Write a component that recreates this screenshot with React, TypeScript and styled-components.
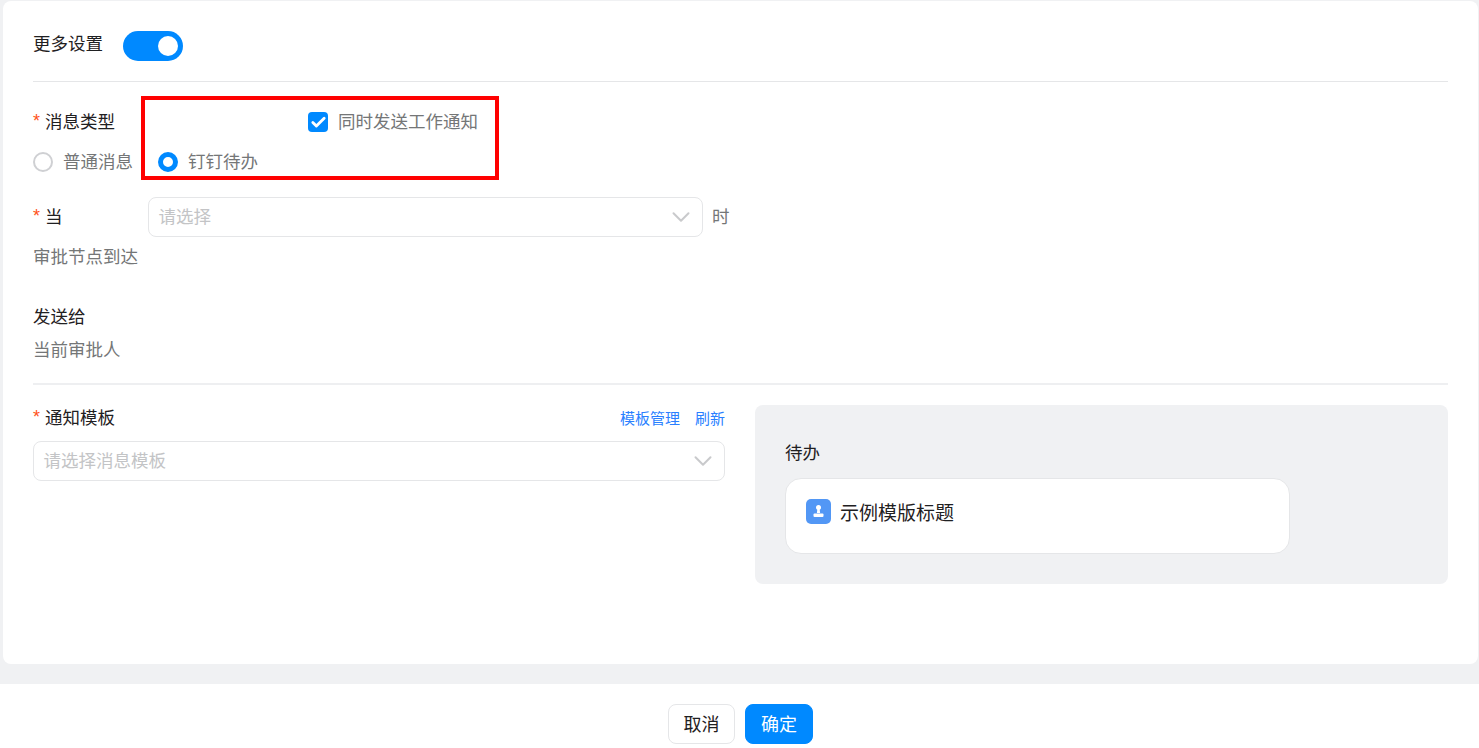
import React from 'react';
import styled, {createGlobalStyle} from 'styled-components';
import {Check, ChevronDown} from 'lucide-react';

const blue = '#0089ff';
const textDark = '#1f2022';
const textGray = '#747677';
const line = '#e5e6e8';

const GlobalStyle = createGlobalStyle`
  html, body {
    margin: 0;
    padding: 0;
    background: #f0f1f3;
  }
  body {
    font-family: "Noto Sans CJK SC", "Liberation Sans", sans-serif;
    font-size: 17.5px;
    color: ${textDark};
  }
  * {
    box-sizing: border-box;
  }
`;

const Page = styled.div`
  display: flex;
  flex-direction: column;
  height: 748px;
  overflow: hidden;
  position: relative;
  width: 1479px;
`;

const Panel = styled.main`
  background: #fff;
  border-radius: 8px;
  height: 663px;
  margin: 1px 1px 0 3px;
  padding: 30px 30px 0 30px;
`;

const Footer = styled.footer`
  align-items: flex-start;
  background: #fff;
  display: flex;
  gap: 10px;
  height: 64px;
  justify-content: center;
  margin-top: 20px;
  padding: 20px 0 0 2px;
`;

const Button = styled.button<{$primary?: boolean}>`
  background: ${props => (props.$primary ? blue : '#fff')};
  border: 1px solid ${props => (props.$primary ? blue : line)};
  border-radius: 8px;
  color: ${props => (props.$primary ? '#fff' : textDark)};
  font: inherit;
  font-size: 18px;
  height: 40px;
  line-height: 1;
  padding: 0 0 2px;
  width: ${props => (props.$primary ? '68px' : '67px')};
`;

const SwitchRow = styled.div`
  align-items: center;
  border-bottom: 1px solid ${line};
  display: flex;
  gap: 20px;
  height: 51px;
  padding-bottom: 20px;
`;

const Label = styled.span`
  height: 26px;
  line-height: 24px;
  white-space: nowrap;
`;

const SwitchLabel = styled(Label)`
  line-height: 20px;
`;

const Toggle = styled.span`
  align-items: center;
  background: ${blue};
  border-radius: 15px;
  display: flex;
  height: 30px;
  justify-content: flex-end;
  padding-right: 5px;
  width: 60px;
`;

const Knob = styled.span`
  background: #fff;
  border-radius: 50%;
  height: 20px;
  width: 20px;
`;

const Required = styled.span`
  color: #ff5219;
  display: inline-block;
  font-family: "Liberation Sans", sans-serif;
  font-size: 18px;
  line-height: 1;
  margin-right: 4px;
  vertical-align: 1px;
  width: 8px;
`;

const TypeHead = styled.div`
  align-items: center;
  display: flex;
  height: 26px;
  justify-content: space-between;
  margin-top: 27px;
  width: 445px;
`;

const OptionText = styled(Label)`
  color: ${textGray};
`;

const CheckOption = styled.label`
  align-items: center;
  display: flex;
  gap: 10px;
`;

const CheckBox = styled.span`
  align-items: center;
  background: ${blue};
  border-radius: 4px;
  color: #fff;
  display: flex;
  height: 20px;
  justify-content: center;
  width: 20px;
`;

const RadioRow = styled.div`
  display: flex;
  gap: 25px;
  margin-top: 14px;
`;

const RadioOption = styled.label`
  align-items: center;
  display: flex;
  gap: 10px;
`;

const Radio = styled.span<{$checked?: boolean}>`
  background: #fff;
  border: ${props => (props.$checked ? `5px solid ${blue}` : '2px solid #cfd0d3')};
  border-radius: 50%;
  height: 20px;
  width: 20px;
`;

const WhenRow = styled.div`
  align-items: center;
  display: flex;
  margin-top: 22px;
`;

const WhenLabel = styled(Label)`
  width: 115px;
`;

const Select = styled.div<{$width: number}>`
  align-items: center;
  background: #fff;
  border: 1px solid ${line};
  border-radius: 8px;
  color: #c3c4c6;
  display: flex;
  height: 40px;
  justify-content: space-between;
  line-height: 36px;
  padding: 0 6px 0 9.5px;
  width: ${props => props.$width}px;
`;

const PlaceholderText = styled.span`
  height: 38px;
`;

const Arrow = styled(ChevronDown)`
  color: #c9cacc;
  flex: none;
`;

const Unit = styled(Label)`
  color: ${textGray};
  margin-left: 9px;
`;

const Hint = styled.div<{$top: number; $lineHeight: number}>`
  color: ${textGray};
  height: 26px;
  line-height: ${props => props.$lineHeight}px;
  margin-top: ${props => props.$top}px;
`;

const SendLabel = styled.div`
  height: 26px;
  line-height: 26px;
  margin-top: 33px;
`;

const Divider = styled.hr`
  background: #eeeff1;
  border: 0;
  height: 2px;
  margin: 21px 0 20px;
`;

const TemplateRow = styled.div`
  display: flex;
  gap: 30px;
`;

const TemplateForm = styled.section`
  width: 692px;
`;

const TemplateHead = styled.div`
  align-items: center;
  display: flex;
  height: 26px;
  justify-content: space-between;
  margin-bottom: 10px;
`;

const Links = styled.div`
  display: flex;
  gap: 15px;
`;

const Link = styled.a`
  color: #2a7fff;
  font-size: 15px;
  line-height: 26px;
`;

const Preview = styled.aside`
  background: #f0f1f3;
  border-radius: 8px;
  height: 179px;
  padding: 35px 30px 0;
  width: 693px;
`;

const PreviewTitle = styled.div`
  height: 26px;
  line-height: 24px;
  margin-bottom: 12px;
`;

const PreviewCard = styled.div`
  align-items: flex-start;
  background: #fff;
  border: 1px solid ${line};
  border-radius: 16px;
  display: flex;
  gap: 9px;
  height: 76px;
  padding: 20px;
  width: 505px;
`;

const CardIcon = styled.svg`
  flex: none;
`;

const CardTitle = styled.span`
  font-size: 19px;
  line-height: 25px;
`;

const Annotation = styled.div`
  border: 4px solid #ff0000;
  height: 84px;
  left: 141px;
  pointer-events: none;
  position: absolute;
  top: 96px;
  width: 358px;
`;

export default function App() {
  return (
    <Page>
      <GlobalStyle />
      <Panel>
        <SwitchRow>
          <SwitchLabel>更多设置</SwitchLabel>
          <Toggle>
            <Knob />
          </Toggle>
        </SwitchRow>

        <TypeHead>
          <Label>
            <Required>*</Required>消息类型
          </Label>
          <CheckOption>
            <CheckBox>
              <Check size={17} strokeWidth={4} />
            </CheckBox>
            <OptionText>同时发送工作通知</OptionText>
          </CheckOption>
        </TypeHead>
        <RadioRow>
          <RadioOption>
            <Radio />
            <OptionText>普通消息</OptionText>
          </RadioOption>
          <RadioOption>
            <Radio $checked />
            <OptionText>钉钉待办</OptionText>
          </RadioOption>
        </RadioRow>

        <WhenRow>
          <WhenLabel>
            <Required>*</Required>当
          </WhenLabel>
          <Select $width={555}>
            <PlaceholderText>请选择</PlaceholderText>
            <Arrow size={30} strokeWidth={1.6} />
          </Select>
          <Unit>时</Unit>
        </WhenRow>
        <Hint $top={7} $lineHeight={24}>审批节点到达</Hint>

        <SendLabel>发送给</SendLabel>
        <Hint $top={7} $lineHeight={26}>当前审批人</Hint>

        <Divider />

        <TemplateRow>
          <TemplateForm>
            <TemplateHead>
              <Label>
                <Required>*</Required>通知模板
              </Label>
              <Links>
                <Link>模板管理</Link>
                <Link>刷新</Link>
              </Links>
            </TemplateHead>
            <Select $width={692}>
              <PlaceholderText>请选择消息模板</PlaceholderText>
              <Arrow size={30} strokeWidth={1.6} />
            </Select>
          </TemplateForm>
          <Preview>
            <PreviewTitle>待办</PreviewTitle>
            <PreviewCard>
              <CardIcon width="25" height="25" viewBox="0 0 25 25">
                <rect width="25" height="25" rx="5" fill="#5297f5" />
                <circle cx="12.5" cy="8.4" r="2.5" fill="#fff" />
                <path d="M11.4 9.5h2.2l.5 4.5h-3.2z" fill="#fff" />
                <rect x="7.5" y="14.5" width="10" height="3.5" rx="1" fill="#fff" />
              </CardIcon>
              <CardTitle>示例模版标题</CardTitle>
            </PreviewCard>
          </Preview>
        </TemplateRow>
      </Panel>
      <Footer>
        <Button>取消</Button>
        <Button $primary>确定</Button>
      </Footer>
      <Annotation />
    </Page>
  );
}
